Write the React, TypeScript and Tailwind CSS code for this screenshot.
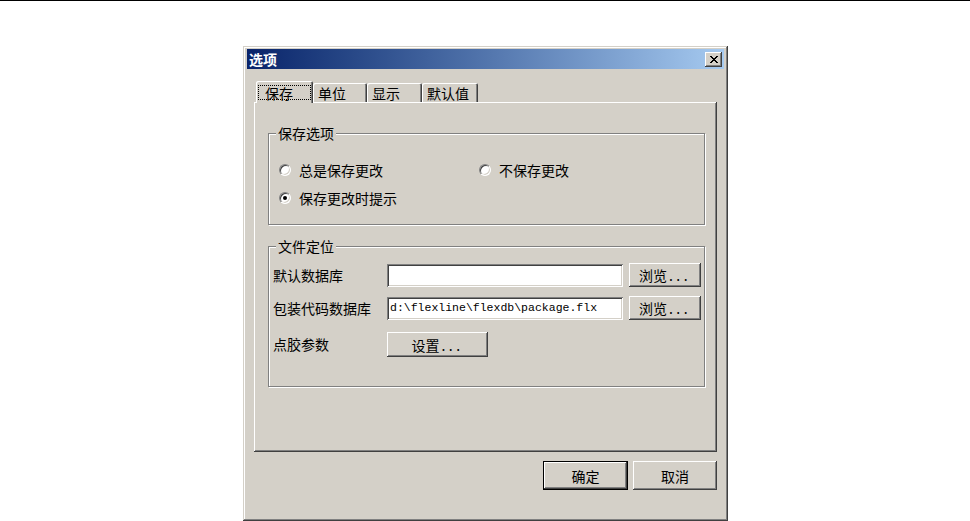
import React from "react";

const raised =
  "shadow-[inset_-1px_-1px_0_#404040,inset_1px_1px_0_#ffffff,inset_-2px_-2px_0_#808080]";
const sunken =
  "shadow-[inset_1px_1px_0_#808080,inset_-1px_-1px_0_#ffffff,inset_2px_2px_0_#404040,inset_-2px_-2px_0_#d4d0c8]";

function CloseGlyph() {
  const rows: [number, number][][] = [
    [[0, 2], [6, 2]],
    [[1, 2], [5, 2]],
    [[2, 4]],
    [[3, 2]],
    [[2, 4]],
    [[1, 2], [5, 2]],
    [[0, 2], [6, 2]],
  ];
  return (
    <svg width="8" height="7" viewBox="0 0 8 7" shapeRendering="crispEdges">
      {rows.map((r, y) =>
        r.map(([x, w]) => <rect key={`${y}-${x}`} x={x} y={y} width={w} height={1} fill="#000" />)
      )}
    </svg>
  );
}

function Radio({ checked, label }: { checked?: boolean; label: string }) {
  return (
    <div className="flex items-center h-[16px]">
      <span className="flex items-center justify-center w-[12px] h-[12px] rounded-full bg-white border border-[#808080] border-r-white border-b-white shadow-[inset_1px_1px_0_#404040,inset_-1px_-1px_0_#d4d0c8]">
        {checked && <span className="w-[4px] h-[4px] rounded-full bg-black" />}
      </span>
      <span className="ml-[8px] leading-[16px]">{label}</span>
    </div>
  );
}

function Btn({
  children,
  className = "",
  isDefault,
}: {
  children: React.ReactNode;
  className?: string;
  isDefault?: boolean;
}) {
  return (
    <div
      className={`flex items-center justify-center bg-[#d4d0c8] leading-none ${raised} ${
        isDefault ? "border border-black" : ""
      } ${className}`}
    >
      {children}
    </div>
  );
}

function Dots() {
  return <span className="tracking-[3.5px] ml-[2px]">...</span>;
}

function Group({
  title,
  className = "",
  children,
}: {
  title: string;
  className?: string;
  children: React.ReactNode;
}) {
  return (
    <div
      className={`relative border border-[#808080] shadow-[inset_1px_1px_0_#ffffff,1px_1px_0_#ffffff] ${className}`}
    >
      <span className="absolute -top-[9px] left-[7px] px-[2px] bg-[#d4d0c8] leading-[16px]">
        {title}
      </span>
      {children}
    </div>
  );
}

export default function App() {
  const tabs = [
    { label: "单位", w: "w-[54px]" },
    { label: "显示", w: "w-[55px]" },
    { label: "默认值", w: "w-[56px]" },
  ];

  return (
    <div className="w-[970px] h-[521px] bg-white border-t border-black pl-[243px] pt-[45px] overflow-hidden font-['Noto_Sans_CJK_SC',sans-serif] text-[14px] text-black">
      <div className="w-[485px] h-[475px] bg-[#d4d0c8] pt-[3px] px-[4px] flex flex-col shadow-[inset_-1px_-1px_0_#404040,inset_1px_1px_0_#d4d0c8,inset_-2px_-2px_0_#808080,inset_2px_2px_0_#ffffff]">
        {/* title bar */}
        <div className="h-[20px] flex items-center justify-between pl-[2px] pr-[2px] bg-gradient-to-r from-[#0a246a] to-[#a6caf0]">
          <span className="text-white font-bold leading-none">选项</span>
          <div className={`w-[17px] h-[15px] flex items-center justify-center bg-[#d4d0c8] ${raised}`}>
            <CloseGlyph />
          </div>
        </div>

        {/* tabs */}
        <div className="mt-[12px] ml-[7px] pl-[2px] h-[21px] flex items-end relative z-10">
          <div className="w-[57px] h-[22px] -mb-[1px] bg-[#d4d0c8] rounded-t-[2px] px-[2px] pt-[4px] pb-[3px] flex shadow-[inset_1px_1px_0_#ffffff,inset_-1px_0_0_#404040,inset_-2px_0_0_#808080]">
            <div className="flex-1 border border-dotted border-black flex items-center pl-[6px] leading-none">
              保存
            </div>
          </div>
          {tabs.map((t) => (
            <div
              key={t.label}
              className={`${t.w} h-[19px] rounded-t-[2px] flex items-center pl-[5px] leading-none shadow-[inset_1px_1px_0_#ffffff,inset_-1px_0_0_#404040,inset_-2px_0_0_#808080]`}
            >
              {t.label}
            </div>
          ))}
        </div>

        {/* page */}
        <div className={`ml-[7px] w-[463px] h-[350px] pt-[31px] pl-[14px] ${raised}`}>
          <Group title="保存选项" className="w-[437px] h-[92px] pt-[28px] pl-[10px]">
            <div className="grid grid-cols-[200px_1fr] gap-y-[12px]">
              <Radio label="总是保存更改" />
              <Radio label="不保存更改" />
              <Radio checked label="保存更改时提示" />
            </div>
          </Group>

          <Group title="文件定位" className="mt-[21px] w-[437px] h-[141px] pt-[16px] pl-[4px]">
            <div className="flex items-center h-[24px]">
              <span className="w-[114px]">默认数据库</span>
              <div className={`w-[236px] h-[23px] bg-white ${sunken}`} />
              <Btn className="ml-[6px] w-[72px] h-[24px]">
                浏览
                <Dots />
              </Btn>
            </div>
            <div className="flex items-center h-[24px] mt-[9px]">
              <span className="w-[114px]">包装代码数据库</span>
              <div
                className={`w-[236px] h-[23px] bg-white ${sunken} flex items-center pl-[3px] font-['Liberation_Mono',monospace] text-[11.5px] leading-none`}
              >
                d:\flexline\flexdb\package.flx
              </div>
              <Btn className="ml-[6px] w-[72px] h-[24px]">
                浏览
                <Dots />
              </Btn>
            </div>
            <div className="flex items-center h-[25px] mt-[12px]">
              <span className="w-[114px]">点胶参数</span>
              <Btn className="w-[101px] h-[25px]">
                设置
                <Dots />
              </Btn>
            </div>
          </Group>
        </div>

        {/* buttons */}
        <div className="mt-[9px] pr-[7px] flex justify-end gap-[5px]">
          <Btn isDefault className="w-[85px] h-[29px]">
            确定
          </Btn>
          <Btn className="w-[84px] h-[29px]">取消</Btn>
        </div>
      </div>
    </div>
  );
}
